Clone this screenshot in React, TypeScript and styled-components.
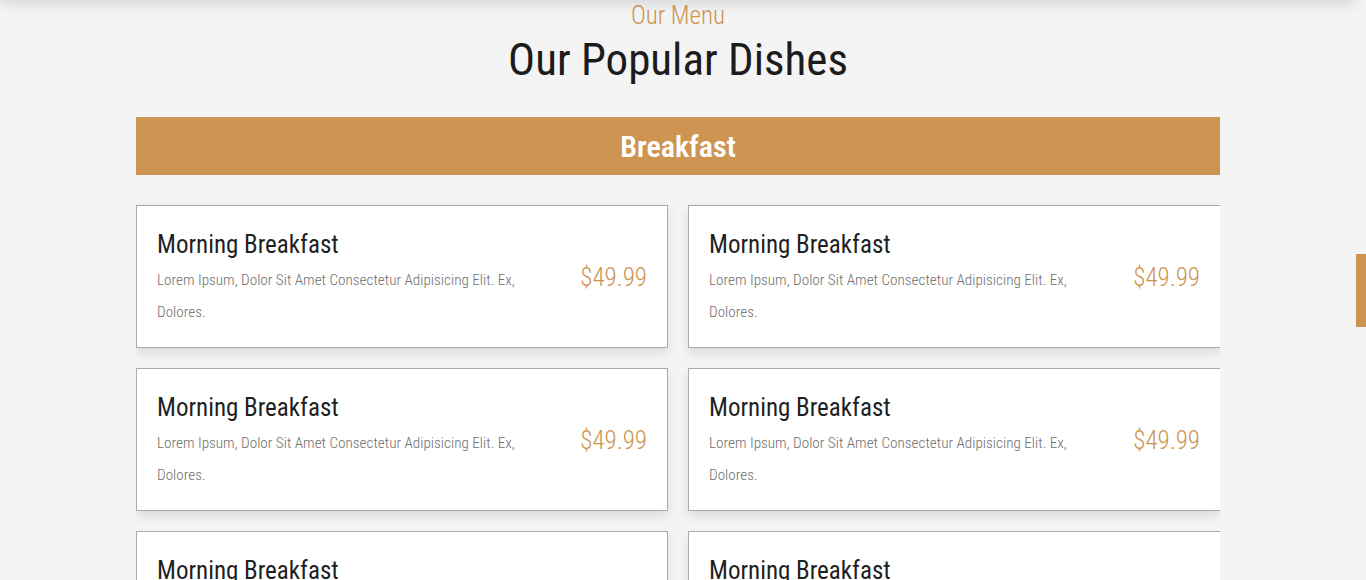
import React from "react";
import styled, { createGlobalStyle } from "styled-components";

const GlobalStyle = createGlobalStyle`
  html, body { margin: 0; padding: 0; overflow: hidden; }
  body { background: #f4f4f4; font-family: "Roboto Condensed", "Liberation Sans Narrow", sans-serif; }
  * { box-sizing: border-box; }
`;

const ACCENT = "#cd9452";

const Page = styled.div`
  display: flex;
  height: 580px;
  background: #f4f4f4;
`;

const HiddenHeader = styled.div`
  position: fixed;
  top: -60px;
  left: 0;
  right: 10px;
  height: 60px;
  background: #fff;
  box-shadow: 0 4px 12px rgba(0, 0, 0, 0.12);
  z-index: 5;
`;

const Main = styled.main`
  flex: 1;
  overflow: hidden;
`;

const ScrollTrack = styled.div`
  width: 10px;
  display: flex;
  flex-direction: column;
  padding-top: 254px;
  background: #f4f4f4;
`;

const ScrollThumb = styled.div`
  height: 73px;
  background: ${ACCENT};
`;

const Section = styled.section`
  width: 1084px;
  margin: 0 auto;
  display: flex;
  flex-direction: column;
`;

const SubHeading = styled.h3`
  margin: 0;
  text-align: center;
  font-size: 25px;
  font-weight: 300;
  line-height: 32px;
  color: ${ACCENT};
`;

const Heading = styled.h1`
  margin: 1px 0 0;
  text-align: center;
  font-size: 45px;
  font-weight: 450;
  line-height: 54px;
  color: #1c1c1c;
`;

const CategoryBar = styled.h2`
  margin: 30px 0 30px;
  height: 58px;
  background: ${ACCENT};
  color: #fff;
  text-align: center;
  font-size: 30px;
  font-weight: 600;
  line-height: 60px;
`;

const Grid = styled.div`
  display: grid;
  grid-template-columns: 532px 533px;
  gap: 20px;
  overflow-x: clip;
  padding-bottom: 20px;
`;

const Card = styled.div`
  background: #fff;
  border: 1px solid #aaa;
  box-shadow: 0 5px 10px rgba(0, 0, 0, 0.1);
  padding: 20px 20px 19px;
  display: flex;
  align-items: center;
  justify-content: space-between;
  gap: 20px;
`;

const Info = styled.div`
  width: 380px;
`;

const DishName = styled.h4`
  margin: 0;
  font-size: 25px;
  font-weight: 400;
  line-height: 38px;
  color: #1f1f1f;
`;

const Description = styled.p`
  margin: 0;
  font-size: 15.2px;
  font-weight: 300;
  line-height: 32px;
  color: #6e6e6e;
`;

const Price = styled.span`
  font-size: 25px;
  font-weight: 300;
  color: ${ACCENT};
  white-space: nowrap;
`;

const dishes = Array.from({ length: 6 }, () => ({
  name: "Morning Breakfast",
  desc: "Lorem Ipsum, Dolor Sit Amet Consectetur Adipisicing Elit. Ex, Dolores.",
  price: "$49.99",
}));

export default function App() {
  return (
    <>
      <GlobalStyle />
      <HiddenHeader />
      <Page>
        <Main>
          <Section>
            <SubHeading>Our Menu</SubHeading>
            <Heading>Our Popular Dishes</Heading>
            <CategoryBar>Breakfast</CategoryBar>
            <Grid>
              {dishes.map((d, i) => (
                <Card key={i}>
                  <Info>
                    <DishName>{d.name}</DishName>
                    <Description>{d.desc}</Description>
                  </Info>
                  <Price>{d.price}</Price>
                </Card>
              ))}
            </Grid>
          </Section>
        </Main>
        <ScrollTrack>
          <ScrollThumb />
        </ScrollTrack>
      </Page>
    </>
  );
}
